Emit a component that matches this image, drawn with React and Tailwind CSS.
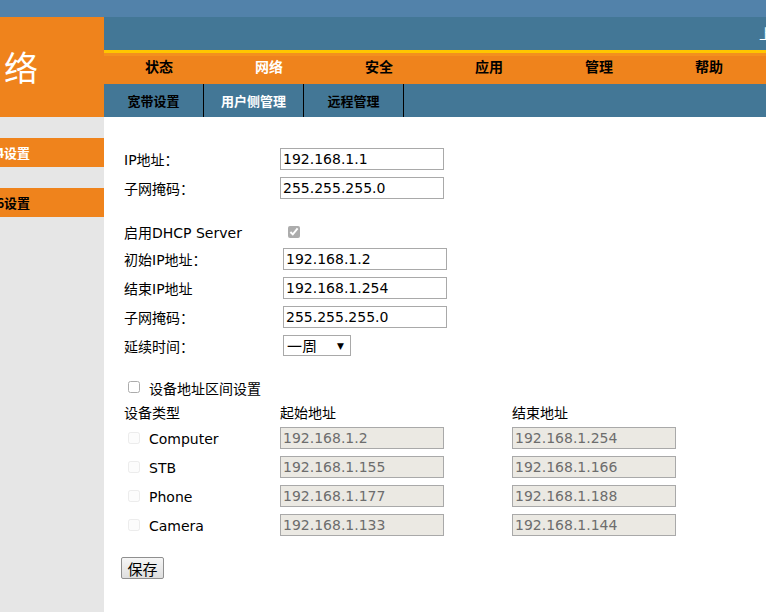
import React, { useState } from "react";

const FONT = { fontFamily: '"DejaVu Sans", "Noto Sans CJK SC", sans-serif' };
const CJK = { fontFamily: '"Noto Sans CJK SC", "DejaVu Sans", sans-serif' };

const mainNav = ["状态", "网络", "安全", "应用", "管理", "帮助"];
const subNav = ["宽带设置", "用户侧管理", "远程管理"];

const devices = [
  { name: "Computer", start: "192.168.1.2", end: "192.168.1.254" },
  { name: "STB", start: "192.168.1.155", end: "192.168.1.166" },
  { name: "Phone", start: "192.168.1.177", end: "192.168.1.188" },
  { name: "Camera", start: "192.168.1.133", end: "192.168.1.144" },
];

const TextInput = ({ value, onChange, disabled }) => (
  <input
    type="text"
    value={value}
    onChange={onChange}
    disabled={disabled}
    className={
      disabled
        ? "w-[164px] h-[22px] px-[2px] border border-[#a9a9a9] bg-[#ebe9e3] text-[#6d6d6d] text-[14px] outline-none shrink-0"
        : "w-[164px] h-[22px] px-[2px] border border-[#a9a9a9] bg-white text-black text-[14px] outline-none shrink-0"
    }
    style={FONT}
  />
);

const App = () => {
  const [form, setForm] = useState({
    ip: "192.168.1.1",
    mask: "255.255.255.0",
    dhcp: true,
    startIp: "192.168.1.2",
    endIp: "192.168.1.254",
    dhcpMask: "255.255.255.0",
    lease: "week",
  });

  const set = (name) => (e) =>
    setForm((prev) => ({
      ...prev,
      [name]: e.target.type === "checkbox" ? e.target.checked : e.target.value,
    }));

  return (
    <div className="w-[766px] h-[612px] overflow-hidden bg-white flex flex-col" style={FONT}>
      {/* Top strip */}
      <div className="h-[17px] bg-[#5282aa] shrink-0" />

      {/* Header */}
      <div className="flex h-[100px] shrink-0">
        <div className="w-[104px] shrink-0 bg-[#ef831c] flex items-center pl-[4px] pb-[1px] overflow-hidden">
          <span className="text-white text-[34px] leading-none" style={CJK}>
            络
          </span>
        </div>
        <div className="flex-1 min-w-0 flex flex-col overflow-hidden">
          <div className="h-[33px] bg-[#437796] flex items-center pl-[655px] overflow-hidden whitespace-nowrap">
            <span className="text-white text-[14px]" style={CJK}>
              上次登录
            </span>
          </div>
          <div className="h-[3px] bg-[#ffc600]" />
          <div className="h-[3px] bg-[#f3901e]" />
          <div className="h-[28px] bg-[#ef831c] flex pb-[8px]">
            {mainNav.map((item) => (
              <div
                key={item}
                className={
                  item === "网络"
                    ? "w-[110px] shrink-0 flex items-center justify-center text-white font-bold text-[14px]"
                    : "w-[110px] shrink-0 flex items-center justify-center text-black font-bold text-[14px]"
                }
                style={CJK}
              >
                {item}
              </div>
            ))}
          </div>
          <div className="h-[33px] bg-[#437796] flex">
            {subNav.map((item) => (
              <div
                key={item}
                className={
                  item === "用户侧管理"
                    ? "w-[100px] shrink-0 flex items-center justify-center border-r border-black text-white font-bold text-[13px]"
                    : "w-[100px] shrink-0 flex items-center justify-center border-r border-black text-black font-bold text-[13px]"
                }
                style={CJK}
              >
                {item}
              </div>
            ))}
          </div>
        </div>
      </div>

      {/* Body */}
      <div className="flex flex-1">
        {/* Sidebar */}
        <div className="w-[104px] bg-[#e6e6e6] pt-[21px] flex flex-col gap-[21px] shrink-0 overflow-hidden">
          <div className="h-[29px] bg-[#ef831c] flex items-center overflow-hidden whitespace-nowrap">
            <span className="ml-[-24px] text-white font-bold text-[13px]" style={CJK}>
              IPv4设置
            </span>
          </div>
          <div className="h-[29px] bg-[#ef831c] flex items-center overflow-hidden whitespace-nowrap">
            <span className="ml-[-24px] text-black font-bold text-[13px]" style={CJK}>
              IPv6设置
            </span>
          </div>
        </div>

        {/* Main content */}
        <div className="flex-1 pl-[20px] pt-[27px] text-[14px] text-black">
          {/* LAN IP */}
          <div className="flex items-center h-[29px]">
            <span className="w-[156px] pt-[4px]">IP地址：</span>
            <TextInput value={form.ip} onChange={set("ip")} />
          </div>
          <div className="flex items-center h-[29px]">
            <span className="w-[156px] pt-[4px]">子网掩码：</span>
            <TextInput value={form.mask} onChange={set("mask")} />
          </div>

          {/* DHCP */}
          <div className="flex items-center h-[25px] mt-[17px]">
            <span className="w-[164px] pt-[4px]">启用DHCP Server</span>
            <input
              type="checkbox"
              checked={form.dhcp}
              onChange={set("dhcp")}
              className="w-[12px] h-[12px] m-0 accent-[#8a8a8a] opacity-70"
            />
          </div>
          <div className="flex items-center h-[29px]">
            <span className="w-[159px] pt-[4px]">初始IP地址：</span>
            <TextInput value={form.startIp} onChange={set("startIp")} />
          </div>
          <div className="flex items-center h-[29px]">
            <span className="w-[159px] pt-[4px]">结束IP地址</span>
            <TextInput value={form.endIp} onChange={set("endIp")} />
          </div>
          <div className="flex items-center h-[29px]">
            <span className="w-[159px] pt-[4px]">子网掩码：</span>
            <TextInput value={form.dhcpMask} onChange={set("dhcpMask")} />
          </div>
          <div className="flex items-center h-[29px]">
            <span className="w-[159px] pt-[4px]">延续时间：</span>
            <div className="relative w-[68px] h-[21px] border border-[#a9a9a9] bg-white">
              <select
                value={form.lease}
                onChange={set("lease")}
                className="appearance-none w-full h-full pl-[3px] bg-transparent text-[15px] leading-none outline-none"
                style={CJK}
              >
                <option value="day">一天</option>
                <option value="week">一周</option>
                <option value="month">一月</option>
              </select>
              <span className="pointer-events-none absolute right-[6px] top-[4px] text-[9px] text-black">▼</span>
            </div>
          </div>

          {/* Device range */}
          <div className="flex items-center h-[24px] mt-[15px] pl-[4px]">
            <input type="checkbox" className="w-[12px] h-[12px] m-0 opacity-60" />
            <span className="ml-[9px] pt-[4px]">设备地址区间设置</span>
          </div>
          <div className="flex items-center h-[24px] pt-[4px]">
            <span className="w-[156px]">设备类型</span>
            <span className="w-[232px]">起始地址</span>
            <span>结束地址</span>
          </div>
          {devices.map((d) => (
            <div key={d.name} className="flex items-center h-[29px]">
              <div className="w-[156px] flex items-center pl-[4px]">
                <input type="checkbox" disabled className="w-[12px] h-[12px] m-0 opacity-40" />
                <span className="ml-[9px] pt-[4px]">{d.name}</span>
              </div>
              <TextInput value={d.start} disabled />
              <div className="w-[68px] shrink-0" />
              <TextInput value={d.end} disabled />
            </div>
          ))}

          <div className="mt-[18px] ml-[-3px]">
            <button
              type="button"
              className="h-[22px] w-[43px] border border-[#8f8f8f] rounded-[2px] bg-gradient-to-b from-[#f6f6f6] to-[#dedede] text-[15px] leading-none text-black"
              style={CJK}
            >
              保存
            </button>
          </div>
        </div>
      </div>
    </div>
  );
};

export default App;
